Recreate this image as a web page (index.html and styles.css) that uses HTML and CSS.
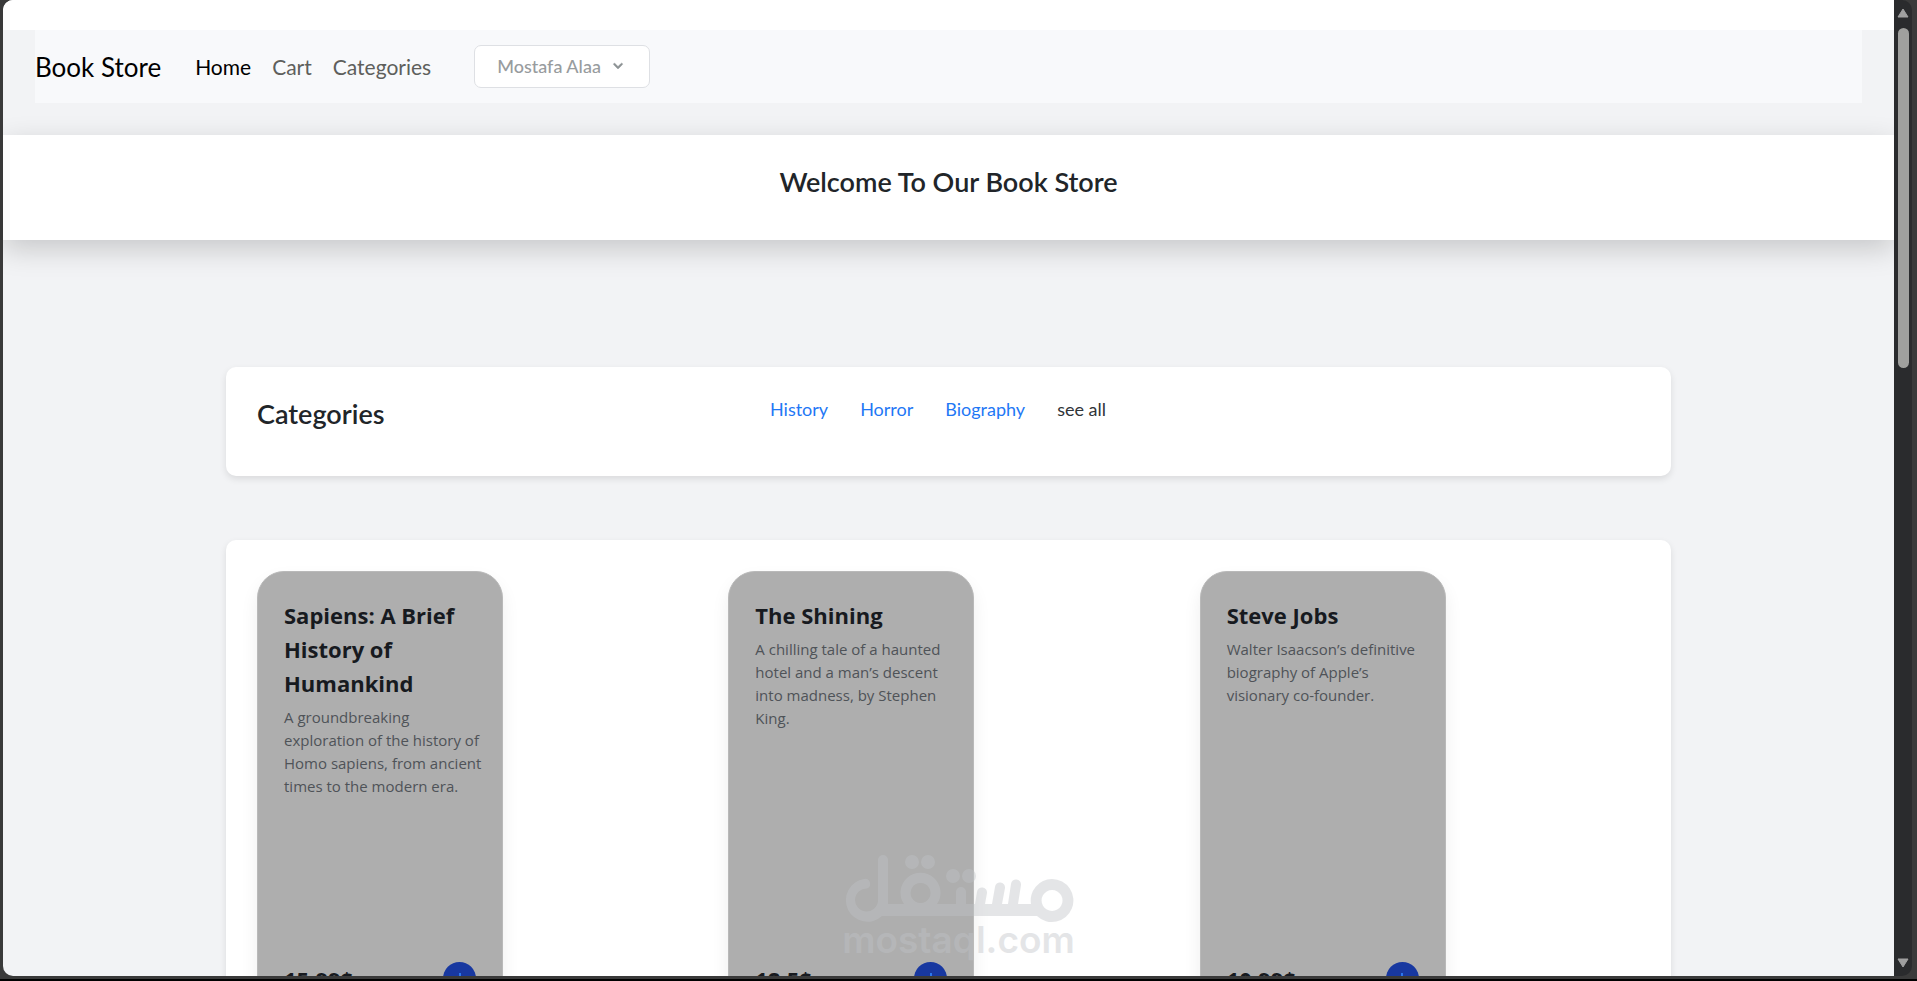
FILE: index.html
```html
<!DOCTYPE html>
<html lang="en">
<head>
<meta charset="utf-8">
<title>Book Store</title>
<link rel="stylesheet" href="styles.css">
</head>
<body>
<div class="window">
  <div class="page">
    <header class="topbar">
      <nav class="navbar">
        <a class="brand" href="#">Book Store</a>
        <a class="nav-link active" href="#">Home</a>
        <a class="nav-link" href="#">Cart</a>
        <a class="nav-link" href="#">Categories</a>
        <button class="user-menu" type="button">Mostafa Alaa
          <svg class="chevron" viewBox="0 0 20 20" aria-hidden="true"><path d="M5.300 7.300a1 1 0 0 1 1.400 0L10 10.600l3.300-3.300a1 1 0 1 1 1.400 1.400l-4 4a1 1 0 0 1-1.400 0l-4-4a1 1 0 0 1 0-1.400z"/></svg>
        </button>
      </nav>
    </header>
    <section class="welcome"><h1>Welcome To Our Book Store</h1></section>
    <main class="content">
      <section class="panel categories">
        <h2>Categories</h2>
        <div class="category-links">
          <a href="#">History</a>
          <a href="#">Horror</a>
          <a href="#">Biography</a>
          <a class="all" href="#">see all</a>
        </div>
      </section>
      <section class="panel books">
        <article class="book">
          <h3>Sapiens: A Brief History of Humankind</h3>
          <p>A groundbreaking exploration of the history of Homo sapiens, from ancient times to the modern era.</p>
          <footer><span class="price">15.99$</span><button class="add" type="button" aria-label="Add to cart"><svg viewBox="0 0 16 16" aria-hidden="true"><path d="M8 1v14M1 8h14"/></svg></button></footer>
        </article>
        <article class="book">
          <h3>The Shining</h3>
          <p>A chilling tale of a haunted hotel and a man’s descent into madness, by Stephen King.</p>
          <footer><span class="price">12.5$</span><button class="add" type="button" aria-label="Add to cart"><svg viewBox="0 0 16 16" aria-hidden="true"><path d="M8 1v14M1 8h14"/></svg></button></footer>
        </article>
        <article class="book">
          <h3>Steve Jobs</h3>
          <p>Walter Isaacson’s definitive biography of Apple’s visionary co-founder.</p>
          <footer><span class="price">10.99$</span><button class="add" type="button" aria-label="Add to cart"><svg viewBox="0 0 16 16" aria-hidden="true"><path d="M8 1v14M1 8h14"/></svg></button></footer>
        </article>
      </section>
    </main>
  </div>
  <div class="scrollbar" aria-hidden="true">
    <svg class="arrow" viewBox="0 0 12 10"><path d="M6 1L11 9H1z" stroke-linejoin="round"/></svg>
    <div class="thumb"></div>
    <svg class="arrow down" viewBox="0 0 12 10"><path d="M1 1h10L6 9z" stroke-linejoin="round"/></svg>
  </div>
  <div class="watermark">
    <svg viewBox="0 0 230 68" aria-hidden="true">
      <path fill-rule="evenodd" d="M208 24a21.500 21.500 0 1 1-15 37H38A21.500 21.500 0 1 1 20 24a5 5 0 0 1 3 9.500A11.500 11.500 0 1 0 34 46V5a5 5 0 0 1 10 0V49H60A20 20 0 1 1 93 49H112V37a5 5 0 0 1 10 0V49H131L133 37a5 5 0 0 1 10 1L141 49H148L151 32a5 5 0 0 1 10 1L158 49H164L167 29a5 5 0 0 1 10 1L174 49H187A21.500 21.500 0 0 1 208 24zM208 35a10.500 10.500 0 1 0 .1 0zM76.500 28a10 10 0 1 0 .1 0z"/>
      <circle cx="68" cy="7" r="7"/><circle cx="84" cy="7" r="7"/><circle cx="109" cy="21" r="7"/><circle cx="125" cy="21" r="7"/>
    </svg>
    <span>mostaql.com</span>
  </div>
</div>
</body>
</html>
```
FILE: styles.css
```css
* { box-sizing: border-box; }
body {
  margin: 0;
  background: #000;
  font-family: Lato, "Noto Sans", sans-serif;
  color: #212529;
}
a { text-decoration: none; color: inherit; }
h1, h2, h3, p { margin: 0; }
.window {
  position: relative;
  display: flex;
  height: 100vh;
  overflow: hidden;
  padding: 0 5px 3px 3px;
  background: #3a3a3a;
  border-bottom: 2px solid #000;
}
.page {
  flex: 1;
  overflow: hidden;
  background: #f2f3f5;
  border-radius: 10px 0 0 10px;
}
.topbar {
  border-top: 30px solid #fff;
  padding: 0 32px 32px;
}
.navbar {
  display: flex;
  align-items: center;
  height: 73px;
  background: #f8f9fb;
  color: #000;
  font-size: 21px;
  line-height: 24px;
}
.brand { font-size: 26px; margin-right: 34px; }
.nav-link { margin-right: 21px; color: #5e5f5c; }
.nav-link.active { color: #000; }
.user-menu {
  display: flex;
  align-items: center;
  gap: 8px;
  height: 43px;
  margin-left: 22px;
  padding: 0 22px 2px;
  border: 1px solid #dee0e4;
  border-radius: 7px;
  background: #fff;
  color: #989c9e;
  font: 500 18px Lato, "Noto Sans", sans-serif;
}
.chevron { width: 18px; height: 18px; fill: #8c9294; stroke: #8c9294; stroke-width: .5; }
.welcome {
  position: relative;
  height: 105px;
  padding-top: 31px;
  background: #fff;
  text-align: center;
  box-shadow: 0 9px 27px rgba(0, 0, 0, .18);
}
h1, h2 { font-size: 27px; line-height: 32px; font-weight: 600; }
.content {
  max-width: 1445px;
  margin: 127px auto 0;
  display: grid;
  gap: 64px;
}
.panel {
  background: #fff;
  border-radius: 10px;
  padding: 31px;
  box-shadow: 0 3px 7px rgba(0, 0, 0, .1);
}
.categories {
  display: grid;
  grid-template-columns: 1fr 1fr 1fr;
  min-height: 109px;
}
.category-links {
  display: flex;
  justify-content: center;
  gap: 32px;
  padding-right: 21px;
  font-size: 18px;
  line-height: 23px;
  white-space: nowrap;
  color: #1f78f5;
}
.category-links .all { color: #303438; }
.books {
  display: grid;
  grid-template-columns: repeat(3, 1fr);
  gap: 31px;
}
.book {
  display: flex;
  flex-direction: column;
  width: 246px;
  height: 451px;
  padding: 26px;
  border: 1px solid #b9b9b9;
  border-radius: 27px;
  background: #aeaeae;
  box-shadow: 0 9px 18px rgba(0, 0, 0, .07);
  font-family: "Open Sans", "Noto Sans", sans-serif;
}
.book h3 { font-size: 22px; line-height: 34px; font-weight: 700; color: #171a1f; margin-bottom: 6px; }
.book p { margin-right: -10px; font-size: 15px; line-height: 23px; color: #4f5358; }
.book footer {
  display: flex;
  align-items: center;
  justify-content: space-between;
  margin-top: auto;
}
.price { font-size: 22px; line-height: 30px; font-weight: 700; color: #171a1f; }
.add {
  display: grid;
  place-items: center;
  width: 33px;
  height: 33px;
  padding: 0;
  border: 0;
  border-radius: 50%;
  background: #1838a0;
}
.add svg { width: 14px; height: 14px; stroke: #2f80f6; stroke-width: 2; }
.scrollbar {
  display: flex;
  flex-direction: column;
  align-items: center;
  width: 18px;
  padding: 8px 0;
  background: #2a2b2d;
  border-radius: 0 10px 10px 0;
}
.arrow { width: 14px; height: 10px; fill: #a0a0a0; stroke: #a0a0a0; }
.thumb {
  width: 11px;
  height: 340px;
  margin-top: 10px;
  border-radius: 6px;
  background: #a0a09e;
}
.down { margin-top: auto; }
.watermark {
  position: absolute;
  left: 0;
  right: 0;
  bottom: 22px;
  display: flex;
  flex-direction: column;
  align-items: center;
  opacity: .42;
  color: #c0c3c7;
  pointer-events: none;
}
.watermark svg { width: 230px; height: 68px; fill: currentColor; }
.watermark span { font: 600 37px/34px Inter, sans-serif; }
```
